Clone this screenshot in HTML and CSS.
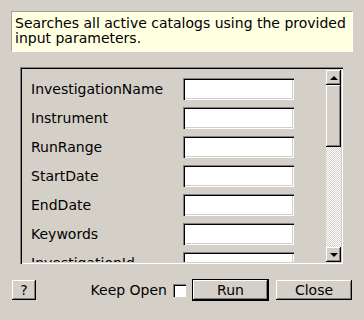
FILE: index.html
```html
<!DOCTYPE html>
<html lang="en">
<head>
  <meta charset="UTF-8">
  <title>Catalog Search</title>
  <link rel="stylesheet" href="styles.css">
</head>
<body>
  <div class="info">Searches all active catalogs using the provided input parameters.</div>

  <div class="pane">
    <div class="form">
      <label>InvestigationName</label><div class="field"></div>
      <label>Instrument</label><div class="field"></div>
      <label>RunRange</label><div class="field"></div>
      <label>StartDate</label><div class="field"></div>
      <label>EndDate</label><div class="field"></div>
      <label>Keywords</label><div class="field"></div>
      <label>InvestigationId</label><div class="field"></div>
      <label>InvestigationType</label><div class="field"></div>
    </div>
    <div class="vbar">
      <div class="arrow up"><span class="tri-up"></span></div>
      <div class="thumb"></div>
      <div class="track"></div>
      <div class="arrow down"><span class="tri-down"></span></div>
    </div>
  </div>

  <div class="actions">
    <button class="btn help">?</button>
    <span class="spacer"></span>
    <span class="keep">Keep Open</span>
    <span class="check"></span>
    <button class="btn run">Run</button>
    <button class="btn">Close</button>
  </div>
</body>
</html>
```

FILE: styles.css
```css
body {
  margin: 0;
  width: 364px;
  height: 320px;
  overflow: hidden;
  background: #d4d0c8;
  font-family: 'DejaVu Sans', sans-serif;
  font-size: 14px;
  color: #000;
}

.info {
  margin: 11px 11px 0;
  padding: 4px 3px 5px;
  line-height: 15px;
  background: #ffffe1;
  border: 1px solid;
  border-color: #a0a0a0 #fff #fff #a0a0a0;
}

.pane {
  margin: 15px 21px 0 20px;
  height: 197px;
  box-sizing: border-box;
  display: flex;
  box-shadow: inset 1px 1px #808080, inset 2px 2px #000, inset -1px -1px #fff, inset -2px -2px #d4d0c8;
  padding: 2px;
  overflow: hidden;
}

.form {
  flex: 1;
  overflow: hidden;
  padding: 9px 0 0 9px;
  display: grid;
  grid-template-columns: 152px 111px;
  grid-auto-rows: 22px;
  row-gap: 7px;
  align-items: center;
}

.form label {
  white-space: nowrap;
  line-height: 22px;
}

.field {
  height: 22px;
  box-sizing: border-box;
  background: #fff;
  box-shadow: inset 1px 1px #808080, inset 2px 2px #000, inset -1px -1px #fff, inset -2px -2px #d4d0c8;
}

.vbar {
  width: 15px;
  padding-top: 1px;
  display: flex;
  flex-direction: column;
}

.arrow, .thumb {
  background: #d4d0c8;
  box-shadow: inset -1px -1px #000, inset 1px 1px #fff, inset -2px -2px #808080;
}

.arrow {
  height: 15px;
  display: flex;
  align-items: center;
  justify-content: center;
}

.thumb {
  height: 62px;
}

.track {
  flex: 1;
  background: repeating-conic-gradient(#fff 0 25%, #d4d0c8 0 50%) 0 0 / 2px 2px;
}

.tri-up, .tri-down {
  width: 0;
  height: 0;
  border-left: 4px solid transparent;
  border-right: 4px solid transparent;
}

.tri-up {
  border-bottom: 4px solid #000;
}

.tri-down {
  border-top: 4px solid #000;
}

.actions {
  margin-top: 16px;
  padding: 0 12px;
  display: flex;
  align-items: center;
}

.spacer {
  flex: 1;
}

.btn {
  height: 20px;
  width: 76px;
  padding: 0;
  border: none;
  background: #d4d0c8;
  font: inherit;
  color: #000;
  box-shadow: inset -1px -1px #000, inset 1px 1px #fff, inset -2px -2px #808080;
}

.help {
  width: 24px;
}

.keep {
  margin-right: 6px;
  line-height: 16px;
  white-space: nowrap;
}

.check {
  width: 13px;
  height: 13px;
  box-sizing: border-box;
  background: #fff;
  box-shadow: inset 1px 1px #808080, inset 2px 2px #000, inset -1px -1px #fff;
  margin-right: 7px;
}

.run {
  width: 75px;
  outline: 1px solid #000;
  margin-right: 8px;
}
```
